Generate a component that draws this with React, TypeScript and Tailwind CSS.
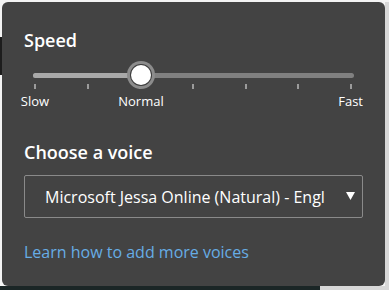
import React from "react";

const ticks = [0, 1, 2, 3, 4, 5, 6];

export default function App() {
  const font = { fontFamily: '"Open Sans", "Noto Sans", sans-serif' };
  return (
    <div
      className="relative w-[389px] h-[290px] overflow-hidden bg-[#f4f4f4]"
      style={font}
    >
      {/* underlying page */}
      <div className="flex h-full flex-col">
        <div className="h-[2px]" />
        <div className="flex flex-1">
          <div className="w-[2px] flex flex-col">
            <div className="h-[35px]" />
            <div className="h-[38px] bg-[#1d1d1d]" />
          </div>
          <div className="flex-1" />
          <div className="w-[4px] bg-[#d8d8d8]" />
        </div>
        <div className="flex h-[4px]">
          <div className="w-[320px] bg-[#1b2626]" />
          <div className="flex-1 bg-[#d8d8d8]" />
        </div>
      </div>

      {/* popup panel */}
      <div className="absolute left-[2px] top-[2px] w-[383px] h-[284px] rounded-md bg-[#434343] px-[22px] pt-[26px] text-white">
        <div className="text-[18px] leading-[24px] font-semibold">Speed</div>

        <div className="relative mt-[8px] h-[30px]">
          <div className="absolute left-[9px] right-[9px] top-[13px] h-[5px] rounded-full bg-[#808080]" />
          <div className="absolute left-[9px] top-[13px] w-[110px] h-[5px] rounded-full bg-[#a9a9a9]" />
          <div className="absolute left-[10px] right-[11px] top-[24px] flex justify-between">
            {ticks.map((t) => (
              <div key={t} className="w-[2px] h-[5px] bg-[#9b9b9b]" />
            ))}
          </div>
          <div className="absolute left-[103px] top-[1px] w-[28px] h-[28px] rounded-full bg-[#8c8c8c] p-[3px]">
            <div className="h-full w-full rounded-full bg-[#3d3d3d] p-[1px]">
              <div className="h-full w-full rounded-full bg-white" />
            </div>
          </div>
        </div>

        <div className="relative mt-[3px] h-[16px] text-[13px] leading-[16px]">
          <span className="absolute left-[11px] -translate-x-1/2">Slow</span>
          <span className="absolute left-[117px] -translate-x-1/2">Normal</span>
          <span className="absolute right-0">Fast</span>
        </div>

        <div className="mt-[31px] text-[18px] leading-[24px] font-semibold">
          Choose a voice
        </div>

        <div className="mt-[11px] flex h-[43px] items-center rounded-[2px] border border-[#8a8a8a] pl-[20px] pr-[7px]">
          <span className="flex-1 overflow-hidden whitespace-nowrap text-[16px] leading-[20px]">
            Microsoft Jessa Online (Natural) - Engl
          </span>
          <svg width="9" height="8" viewBox="0 0 9 8" className="ml-2 mb-[2px]">
            <path d="M0 0 H9 L4.5 8 Z" fill="white" />
          </svg>
        </div>

        <div className="mt-[24px] text-[16px] leading-[20px] font-medium text-[#67ade5]">
          Learn how to add more voices
        </div>
      </div>
    </div>
  );
}
